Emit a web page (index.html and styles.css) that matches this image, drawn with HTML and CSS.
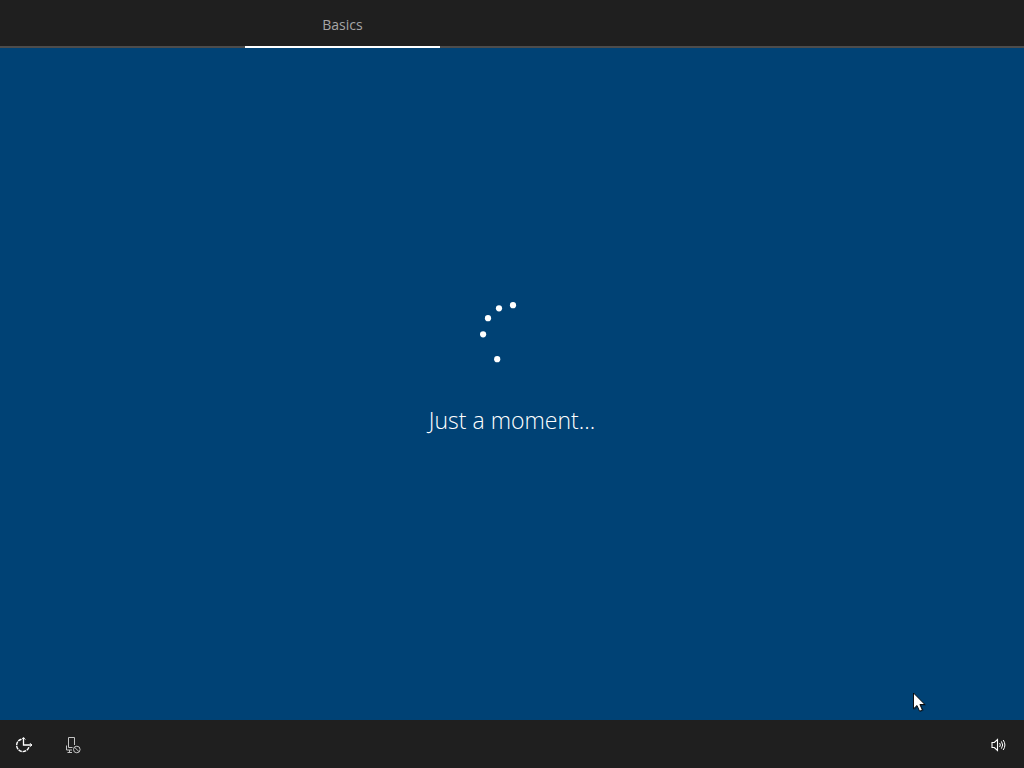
FILE: index.html
```html
<!DOCTYPE html>
<html lang="en">
<head>
    <meta charset="UTF-8">
    <meta name="viewport" content="width=device-width, initial-scale=1.0">
    <title>Setup</title>
    <link rel="stylesheet" href="styles.css">
</head>
<body>

<header class="top-bar">
    <div class="step active">Basics</div>
</header>

<main class="content">
    <svg class="spinner" viewBox="0 0 64 64" aria-hidden="true">
        <circle cx="33" cy="3.2" r="3.1"/>
        <circle cx="19" cy="6.3" r="3.1"/>
        <circle cx="8" cy="16.2" r="3.1"/>
        <circle cx="3.1" cy="32.3" r="3.1"/>
        <circle cx="17.2" cy="57.2" r="3.1"/>
    </svg>
    <h1 class="message">Just a moment...</h1>
</main>

<footer class="bottom-bar">
    <button type="button" class="icon-button" aria-label="Ease of Access">
        <svg viewBox="0 0 18 18">
            <path d="M8.5 1.5v7.5h8.5" stroke-width="1.3"/>
            <path d="M6.7 3.5L8.5 1.7l1.8 1.8M15 7.2L16.8 9 15 10.8"/>
            <path d="M6.3 3.2A6.3 6.3 0 1 0 14 11" stroke-width="1.4" stroke-dasharray="3.6 .8"/>
        </svg>
    </button>
    <button type="button" class="icon-button muted" aria-label="Microphone off">
        <svg viewBox="0 0 18 18">
            <path d="M4.5 11.5v-10h6v7.5M4.5 11.5h4M2.5 9.5v4.5h5.5M5.5 14v2.5M3.5 16.5h4.5"/>
            <circle cx="12.8" cy="13.5" r="3.3"/>
            <path d="M10.5 11.2l4.6 4.6"/>
        </svg>
    </button>
    <button type="button" class="icon-button volume" aria-label="Volume">
        <svg viewBox="0 0 18 18">
            <path d="M2 6.5h2.3L7.5 3.5v11L4.3 11.5H2z" stroke-width="1.1"/>
            <path d="M9.6 7q1.5 2 0 4"/>
            <path d="M11.4 5.4q2.6 3.6 0 7.2"/>
            <path d="M13.2 4q3.4 5 0 10"/>
        </svg>
    </button>
</footer>

<svg class="cursor" viewBox="0 0 14 21" aria-hidden="true">
    <path d="M1.5 3v15l3.6-3.2 2.5 5.2 3.2-1.4-2.4-5.1H13z" fill="#000" opacity=".35"/>
    <path d="M.5 1v15.8l3.5-3.3 2.6 5.7 2.8-1.2-2.5-5.5h5z" fill="#fff" stroke="#000" stroke-width=".9"/>
</svg>

</body>
</html>
```

FILE: styles.css
```css
* {
    box-sizing: border-box;
}
body {
    margin: 0;
    min-height: 100vh;
    display: flex;
    flex-direction: column;
    font-family: "Open Sans", "Noto Sans", sans-serif;
    background-color: #004275;
    color: #fff;
}
.top-bar {
    display: flex;
    height: 48px;
    padding-left: 245px;
    background: linear-gradient(#4c4c4c, #4c4c4c) bottom / 100% 2px no-repeat #1f1f1f;
}
.step {
    width: 195px;
    height: 48px;
    padding-top: 2px;
    color: #a6a6a6;
    font-size: 14px;
    line-height: 46px;
    text-align: center;
}
.step.active {
    border-bottom: 2px solid #fff;
}
.content {
    flex: 1;
    display: flex;
    flex-direction: column;
    align-items: center;
    justify-content: center;
    gap: 38px;
    padding-bottom: 30px;
}
.spinner {
    width: 64px;
    height: 64px;
    fill: #fff;
}
.message {
    margin: 0;
    font-size: 23px;
    font-weight: 300;
    line-height: 32px;
}
.bottom-bar {
    display: flex;
    gap: 1px;
    height: 48px;
    padding: 2px 1px 0 0;
    background-color: #1f1f1f;
}
.icon-button {
    display: flex;
    align-items: center;
    justify-content: center;
    width: 48px;
    padding: 0;
    border: none;
    background: none;
    color: #fff;
    cursor: pointer;
}
.icon-button svg {
    width: 18px;
    height: 18px;
    fill: none;
    stroke: currentColor;
}
.icon-button.muted {
    color: #c4c4c4;
}
.icon-button.volume {
    margin-left: auto;
}
.cursor {
    position: absolute;
    left: 913px;
    top: 692px;
    width: 14px;
    height: 21px;
    pointer-events: none;
}
```
